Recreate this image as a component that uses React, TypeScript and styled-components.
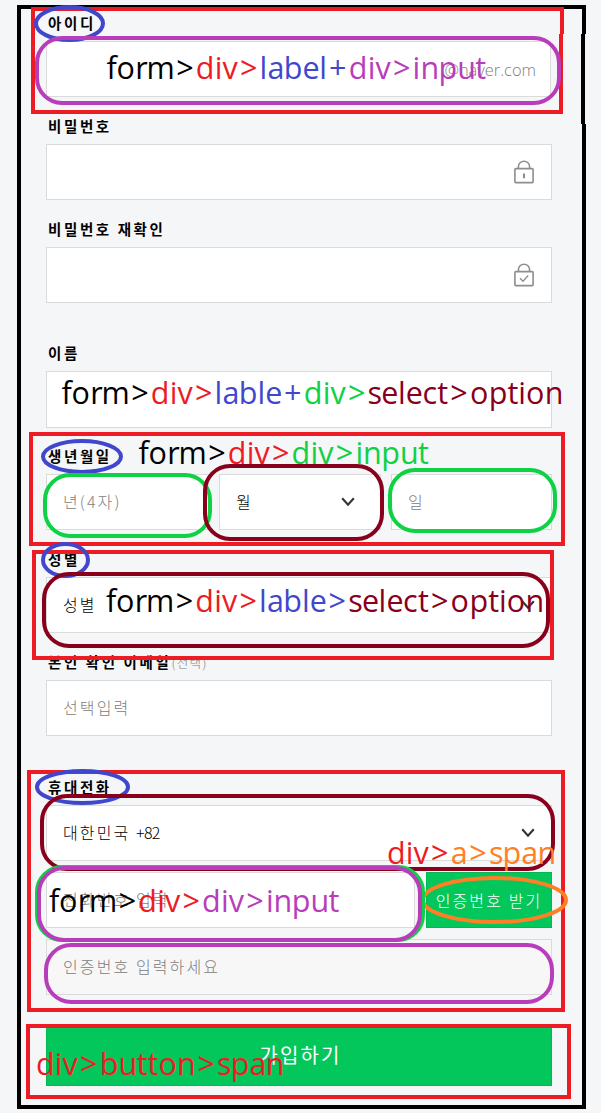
import React from "react";
import styled, { createGlobalStyle } from "styled-components";

const GlobalStyle = createGlobalStyle`
  *, *::before, *::after { box-sizing: border-box; }
  body { margin: 0; background: #f5f6f8; }
`;

const ink = {
  black: "#000000",
  red: "#ed1c24",
  blue: "#3f48cc",
  purple: "#b83dba",
  green: "#0ed145",
  maroon: "#88001b",
  orange: "#ff7f27",
};

const Page = styled.main`
  position: relative;
  width: 601px;
  height: 1113px;
  overflow: hidden;
  background: #f5f6f8;
  font-family: "Noto Sans CJK KR", "Noto Sans", sans-serif;
`;

const SignUpForm = styled.form`
  display: flex;
  flex-direction: column;
  width: 506px;
  margin-left: 46px;
  padding-top: 14px;
`;

const Field = styled.div<{ $gap?: number }>`
  display: flex;
  flex-direction: column;
  margin-top: ${(p) => p.$gap ?? 0}px;
`;

const Label = styled.label`
  height: 20px;
  margin-bottom: 7px;
  padding-left: 2px;
  font-size: 14.5px;
  font-weight: 700;
  line-height: 17px;
  letter-spacing: 2.6px;
  white-space: nowrap;
  color: #000;
`;

const Optional = styled.span`
  font-size: 12.5px;
  font-weight: 300;
  letter-spacing: 1.4px;
  color: #808080;
`;

const Box = styled.div<{ $height?: number; $width?: number; $muted?: boolean }>`
  display: flex;
  align-items: center;
  justify-content: space-between;
  width: ${(p) => (p.$width ? `${p.$width}px` : "100%")};
  height: ${(p) => p.$height ?? 56}px;
  padding: 0 17px 0 16px;
  border: 1px solid #dadada;
  background: ${(p) => (p.$muted ? "#f7f7f7" : "#fff")};
`;

const Value = styled.span<{ $placeholder?: boolean }>`
  padding-bottom: 2px;
  font-size: 16px;
  font-weight: 300;
  line-height: 20px;
  letter-spacing: 2.1px;
  white-space: nowrap;
  color: ${(p) => (p.$placeholder ? "#808080" : "#000")};
`;

const DialCode = styled.span`
  letter-spacing: -0.6px;
`;

const Domain = styled.span`
  margin: 0 -3px 0 auto;
  font-family: "Open Sans", sans-serif;
  font-size: 16.4px;
  font-weight: 300;
  color: #808080;
`;

const BirthRow = styled.div`
  display: grid;
  grid-template-columns: 163px 162px 161px;
  column-gap: 10px;
`;

const PhoneRow = styled.div`
  display: flex;
  justify-content: space-between;
  margin: 11px 0;
`;

const CodeButton = styled.a`
  display: flex;
  align-items: center;
  justify-content: center;
  width: 126px;
  height: 56px;
  border: 1px solid #05b754;
  background: #03c75a;
  font-size: 16px;
  font-weight: 300;
  letter-spacing: 2.1px;
  white-space: nowrap;
  color: #fff;
`;

const SubmitButton = styled.button`
  display: flex;
  align-items: center;
  justify-content: center;
  height: 61px;
  margin-top: 30px;
  padding: 0 0 2px 3px;
  border: 1px solid #05b754;
  background: #03c75a;
  font-family: inherit;
  font-size: 20px;
  font-weight: 400;
  letter-spacing: 2.1px;
  color: #fff;
`;

const Glyph = styled.svg`
  flex: none;
  fill: none;
`;

const ChevronSlot = styled.span<{ $inset?: number }>`
  display: flex;
  margin-right: ${(p) => p.$inset ?? 0}px;
`;

const Markup = styled.svg`
  position: absolute;
  inset: 0;
  fill: none;
  stroke-width: 4;
  pointer-events: none;
`;

const NoteText = styled.text`
  font-family: "Open Sans", sans-serif;
  font-size: 30.5px;
  font-weight: 400;
  stroke: none;
`;

const Lock = ({ checked = false }: { checked?: boolean }) => (
  <Glyph width="20" height="24" viewBox="0 0 20 24" stroke="#8e8e8e" strokeWidth="1.6">
    <rect x="0.9" y="8.6" width="18.2" height="14" rx="0.8" />
    <path d="M4.4 8.5V6.6a5.6 5.4 0 0 1 11.2 0v1.9" />
    {checked ? <path d="M6 15.2l3 3 5.2-5.6" strokeWidth="1.4" /> : <path d="M10 13.4v4.8" strokeWidth="2" />}
  </Glyph>
);

const Chevron = ({ inset = -1 }: { inset?: number }) => (
  <ChevronSlot $inset={inset}>
    <Glyph width="14" height="10" viewBox="0 0 14 10" stroke="#333" strokeWidth="2.1">
      <path d="M1.2 1.2L7 7.6l5.8-6.4" />
    </Glyph>
  </ChevronSlot>
);

// Advance of each character in ems, so the notes keep an even hand-placed pitch.
const advance: Record<string, number> = {
  f: 0.313, o: 0.586, r: 0.348, m: 0.861, ">": 0.684, "+": 0.684, d: 0.588,
  i: 0.242, v: 0.479, l: 0.242, a: 0.509, b: 0.588, e: 0.523, n: 0.565,
  p: 0.588, u: 0.565, t: 0.339, s: 0.424, c: 0.462,
};

type Part = [text: string, color: keyof typeof ink];

const Note = ({ x, y, parts }: { x: number; y: number; parts: Part[] }) => {
  let pen = x + 0.5;
  return (
    <NoteText y={y}>
      {parts.map(([text, color], i) => {
        const xs = [...text].map((ch) => {
          const at = pen + (ch === ">" || ch === "+" ? 2.2 : 0);
          pen += advance[ch] * 32;
          return at.toFixed(1);
        });
        return (
          <tspan key={i} x={xs.join(" ")} fill={ink[color]}>
            {text}
          </tspan>
        );
      })}
    </NoteText>
  );
};

type Edges = { l: number; t: number; r: number; b: number; color: keyof typeof ink };

const Outline = ({ l, t, r, b, color, round = 0 }: Edges & { round?: number }) => (
  <rect x={l + 2} y={t + 2} width={r - l - 4} height={b - t - 4} rx={round} stroke={ink[color]} />
);

const Ring = ({ l, t, r, b, color }: Edges) => (
  <ellipse cx={(l + r) / 2} cy={(t + b) / 2} rx={(r - l) / 2 - 2} ry={(b - t) / 2 - 2} stroke={ink[color]} />
);

const Annotations = () => (
  <Markup width="601" height="1113" viewBox="0 0 601 1113">
    <path d="M584 34V7H19V1107H584V124M583 34V124" stroke={ink.black} />
    <path d="M562 34V9H33V112H561V34" stroke={ink.red} />
    <Ring l={34} t={5} r={105} b={42} color="blue" />
    <Outline l={35} t={36} r={561} b={105} round={25} color="purple" />
    <Note x={106} y={79} parts={[["form>", "black"], ["div>", "red"], ["label+", "blue"], ["div>input", "purple"]]} />

    <Note x={61} y={404} parts={[["form>", "black"], ["div>", "red"], ["lable+", "blue"], ["div>", "green"], ["select>option", "maroon"]]} />

    <Outline l={29} t={432} r={565} b={546} color="red" />
    <Ring l={41} t={439} r={123} b={474} color="blue" />
    <Note x={138} y={464} parts={[["form>", "black"], ["div>", "red"], ["div>input", "green"]]} />
    <Outline l={43} t={473} r={212} b={538} round={25} color="green" />
    <Outline l={203} t={464} r={384} b={541} round={25} color="maroon" />
    <Outline l={388} t={468} r={557} b={533} round={25} color="green" />

    <Outline l={32} t={550} r={554} b={660} color="red" />
    <Ring l={41} t={542} r={90} b={578} color="blue" />
    <Outline l={42} t={572} r={550} b={648} round={25} color="maroon" />
    <Note x={105.5} y={612} parts={[["form>", "black"], ["div>", "red"], ["lable>", "blue"], ["select>option", "maroon"]]} />

    <Outline l={27} t={770} r={565} b={1012} color="red" />
    <Ring l={35} t={769} r={130} b={805} color="blue" />
    <Outline l={40} t={794} r={555} b={871} round={25} color="maroon" />
    <Note x={386.5} y={864} parts={[["div>", "red"], ["a>span", "orange"]]} />
    <Ring l={421} t={876} r={568} b={924} color="orange" />
    <Outline l={35} t={865} r={425} b={942} round={25} color="green" />
    <Outline l={37} t={866} r={422} b={942} round={25} color="purple" />
    <Note x={48.5} y={912} parts={[["form>", "black"], ["div>", "red"], ["div>input", "purple"]]} />
    <Outline l={44} t={943} r={554} b={1004} round={25} color="purple" />

    <Outline l={26} t={1024} r={571} b={1099} color="red" />
    <Note x={35.5} y={1075} parts={[["div>button>span", "red"]]} />
  </Markup>
);

export default function App() {
  return (
    <>
      <GlobalStyle />
      <Page>
        <SignUpForm>
          <Field>
            <Label>아이디</Label>
            <Box $width={505}>
              <Domain>@naver.com</Domain>
            </Box>
          </Field>
          <Field $gap={20}>
            <Label>비밀번호</Label>
            <Box>
              <Value />
              <Lock />
            </Box>
          </Field>
          <Field $gap={20}>
            <Label>비밀번호 재확인</Label>
            <Box>
              <Value />
              <Lock checked />
            </Box>
          </Field>
          <Field $gap={41}>
            <Label>이름</Label>
            <Box $height={57} />
          </Field>
          <Field $gap={19}>
            <Label>생년월일</Label>
            <BirthRow>
              <Box>
                <Value $placeholder>년(4자)</Value>
              </Box>
              <Box>
                <Value>월</Value>
                <Chevron inset={8} />
              </Box>
              <Box>
                <Value $placeholder>일</Value>
              </Box>
            </BirthRow>
          </Field>
          <Field $gap={20}>
            <Label>성별</Label>
            <Box>
              <Value>성별</Value>
              <Chevron />
            </Box>
          </Field>
          <Field $gap={20}>
            <Label>
              본인 확인 이메일<Optional>(선택)</Optional>
            </Label>
            <Box>
              <Value $placeholder>선택입력</Value>
            </Box>
          </Field>
          <Field $gap={42}>
            <Label>휴대전화</Label>
            <Box>
              <Value>
                대한민국 <DialCode>+82</DialCode>
              </Value>
              <Chevron />
            </Box>
            <PhoneRow>
              <Box $width={369}>
                <Value $placeholder>전화번호 입력</Value>
              </Box>
              <CodeButton>
                <span>인증번호 받기</span>
              </CodeButton>
            </PhoneRow>
            <Box $muted>
              <Value $placeholder>인증번호 입력하세요</Value>
            </Box>
          </Field>
          <SubmitButton type="button">
            <span>가입하기</span>
          </SubmitButton>
        </SignUpForm>
        <Annotations />
      </Page>
    </>
  );
}
